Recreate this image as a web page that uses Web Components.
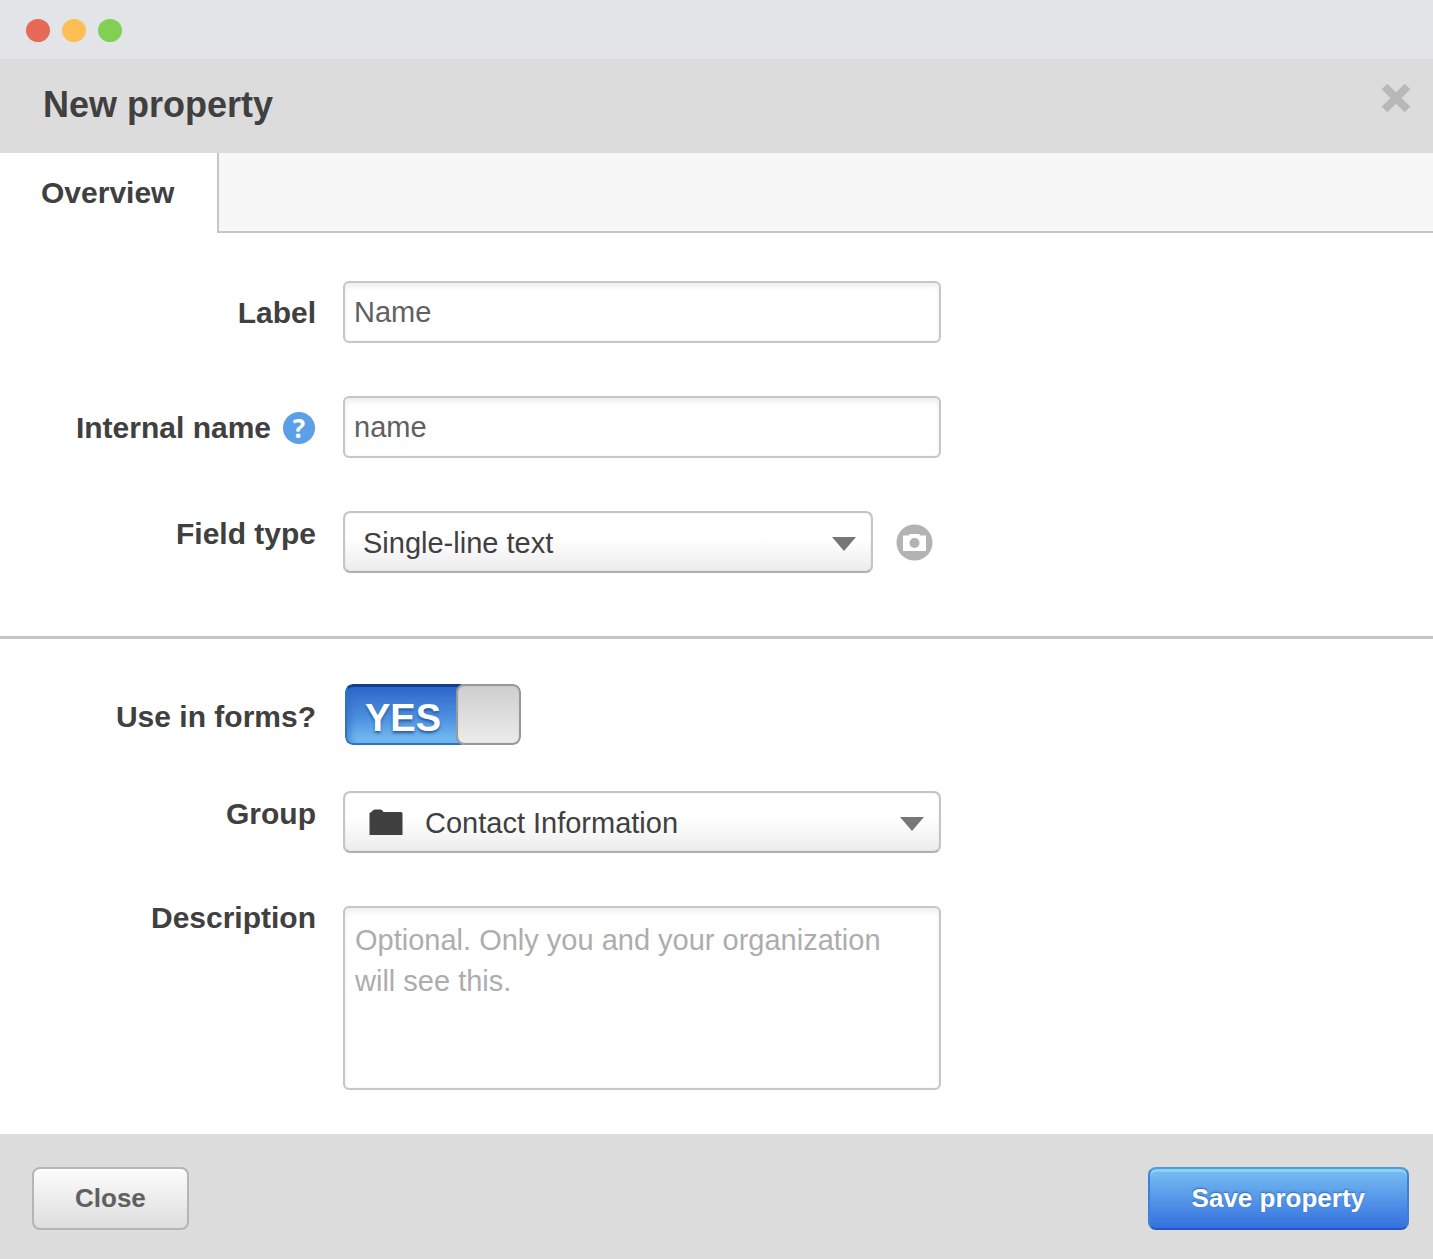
<!DOCTYPE html>
<html lang="en">
<head>
<meta charset="utf-8">
<meta name="viewport" content="width=device-width, initial-scale=1">
<title>New property</title>
<style>
  body { margin: 0; background: #fff; color: #404040; font-family: "Liberation Sans", Arial, sans-serif; }
</style>
</head>
<body>
<property-dialog></property-dialog>

<script>
const define = (name, html) => {
  const template = document.createElement('template');
  template.innerHTML = html;
  customElements.define(name, class extends HTMLElement {
    constructor() {
      super();
      this.attachShadow({ mode: 'open' }).append(template.content.cloneNode(true));
    }
  });
};

define('window-bar', `
<style>
  :host { display: flex; align-items: center; gap: 12px; box-sizing: border-box; height: 59px; padding: 1px 26px 0; background: #e2e4e8; }
  i { width: 24px; height: 23px; border-radius: 50%; background: #e66a57; }
  i:nth-of-type(2) { background: #fcbe55; }
  i:nth-of-type(3) { background: #80d153; }
</style>
<i></i><i></i><i></i>`);

define('dialog-header', `
<style>
  :host { display: flex; justify-content: space-between; align-items: flex-start; height: 94px; padding: 0 22px 0 43px; background: #dcdcdc; }
  h1 { margin: 0; font-size: 36px; line-height: 92px; font-weight: bold; }
  button { display: flex; margin: 24px 0 0; padding: 0; border: 0; background: none; cursor: pointer; }
</style>
<h1><slot></slot></h1>
<button type="button" aria-label="Close dialog">
  <svg width="30" height="30" viewBox="0 0 30 30" fill="none" stroke="#b8b8b8" stroke-width="8"><path d="M3.500 3.500 26.500 26.500M26.500 3.500 3.500 26.500"/></svg>
</button>`);

define('tab-strip', `
<style>
  :host { display: flex; height: 80px; }
  nav { display: flex; }
  a { box-sizing: border-box; padding: 0 43px 0 41px; border-right: 2px solid #c6c6c6; background: #fff; color: #404040; font-size: 30px; font-weight: bold; line-height: 80px; text-decoration: none; }
  .rest { flex: 1; border-bottom: 2px solid #c6c6c6; background: #f7f7f7; }
</style>
<nav><a href="#overview" aria-current="page"><slot></slot></a></nav>
<div class="rest"></div>`);

define('form-section', `
<style>
  :host { display: flex; flex-direction: column; gap: 53px; padding: 48px 24px 63px 0; }
  :host([divided]) { border-top: 3px solid #c6c6c6; padding: 45px 24px 44px 0; }
</style>
<slot></slot>`);

define('form-row', `
<style>
  :host { display: grid; grid-template-columns: minmax(200px, 316px) minmax(0, 598px); column-gap: 27px; --label-height: 64px; margin-bottom: -2px; }
  :host([kind="select"]) { --label-height: 46px; margin-bottom: 0; }
  :host([kind="area"]) { --label-height: 24px; margin-bottom: 0; }
  :host([kind="switch"]) { --label-height: 66px; margin-bottom: -12px; }
  .label { display: flex; align-items: center; justify-content: flex-end; gap: 12px; height: var(--label-height); font-size: 30px; font-weight: bold; white-space: nowrap; }
  .control { display: flex; align-items: flex-start; gap: 23px; }
</style>
<div class="label"><slot name="label"></slot></div>
<div class="control"><slot></slot></div>`);

define('help-tip', `
<style>
  :host { display: flex; margin-right: 1px; }
  button { width: 32px; height: 32px; padding: 0; border: 0; border-radius: 50%; background: #5a9fe8; color: #fff; font: bold 26px/32px "Open Sans", sans-serif; cursor: pointer; }
</style>
<button type="button">?</button>`);

define('camera-button', `
<style>
  :host { display: flex; align-items: center; height: 62px; margin-right: 8px; }
  button { display: flex; padding: 0; border: 0; background: none; cursor: pointer; }
</style>
<button type="button" aria-label="Show example">
  <svg width="37" height="37" viewBox="0 0 37 37">
    <circle cx="18.500" cy="18.500" r="18" fill="#b3b3b3"/>
    <path d="M7 11.500h5.500l1.500-1.500h9l1.500 1.500H30V27H7z" fill="#fff"/>
    <circle cx="18.500" cy="19" r="5" fill="#b3b3b3"/>
  </svg>
</button>`);

define('text-field', `
<style>
  :host { display: block; flex: 1; min-width: 0; }
  ::slotted(*) { display: block; box-sizing: border-box; width: 100%; margin: 0; border: 2px solid #c6c6c6; border-radius: 6px; background: #fff; color: #606060; font: 29px/41px "Liberation Sans", Arial, sans-serif; box-shadow: inset 0 4px 5px #f0f0f0, inset 0 0 1px #c6c6c6; }
  ::slotted(input) { height: 62px; padding: 1px 9px 0; }
  ::slotted(textarea) { height: 184px; padding: 12px 20px 12px 10px; resize: none; }
  ::slotted(textarea)::placeholder { color: #adadad; opacity: 1; }
</style>
<slot></slot>`);

define('select-field', `
<style>
  :host { display: grid; flex: 1; min-width: 0; align-items: center; }
  ::slotted(*), svg { grid-area: 1 / 1; }
  ::slotted(select) { box-sizing: border-box; width: 100%; height: 62px; margin: 0; padding: 1px 50px 0 18px; appearance: none; border: 2px solid #c4c4c4; border-bottom-color: #b0b0b0; border-radius: 7px; background: linear-gradient(#fff 45%, #ececec); box-shadow: inset 0 0 1px #b8b8b8; color: #404040; font: 29px "Liberation Sans", Arial, sans-serif; }
  :host([icon]) ::slotted(select) { padding-left: 80px; }
  svg { justify-self: end; margin: 4px 17px 0 0; pointer-events: none; z-index: 1; }
  ::slotted(folder-icon) { justify-self: start; margin-left: 26px; pointer-events: none; }
</style>
<slot></slot>
<svg width="24" height="14" viewBox="0 0 24 14"><path d="M0 0h24L12 14z" fill="#777"/></svg>`);

define('folder-icon', `
<style>:host { display: flex; z-index: 1; }</style>
<svg width="34" height="27" viewBox="0 0 34 27"><path d="M.500 26V4.500Q.500 3 2.500 3Q3.500 .500 6 .500h5.500Q13.500 .500 14.500 3H32q1.500 0 1.500 1.500V26z" fill="#404040"/></svg>`);

define('toggle-switch', `
<style>
  :host { position: relative; display: flex; box-sizing: border-box; width: 176px; height: 61px; margin-left: 2px; border-radius: 8px; overflow: hidden; }
  ::slotted(input) { position: absolute; inset: 0; width: 100%; height: 100%; margin: 0; opacity: 0; cursor: pointer; }
  .on { box-sizing: border-box; flex: 1; margin-right: -6px; padding: 4px 0 0 18px; border: 2px solid #3273bd; border-right: 0; border-top: 3px solid #123f8d; border-radius: 8px 0 0 8px; background: linear-gradient(#2f68cc, #4d90df 55%, #78c0f2); box-shadow: inset 4px 2px 6px #2d66bd80; color: #fff; font-size: 38px; font-weight: bold; line-height: 55px; text-shadow: 0 2px 3px #24589c; }
  .knob { box-sizing: border-box; width: 65px; border: 2px solid #999; border-radius: 8px; background: linear-gradient(#cecece, #ececec); box-shadow: inset 0 0 1px #999; }
</style>
<span class="on" aria-hidden="true">YES</span><span class="knob"></span><slot></slot>`);

define('push-button', `
<style>
  :host { display: block; }
  button { box-sizing: border-box; height: 63px; padding: 0 41px; border: 2px solid #b5b5b5; border-radius: 8px; background: linear-gradient(#fbfbfb, #dedede); box-shadow: inset 0 2px #fff; color: #606060; font: bold 26px "Liberation Sans", Arial, sans-serif; cursor: pointer; }
  :host([primary]) button { padding: 0 42px; border-color: #529ada #3f7edb #2559bf; background: linear-gradient(#78bff2, #3470df); box-shadow: inset 0 3px #8bd0f5; color: #fff; text-shadow: 0 -1px 2px #2e65b5; }
</style>
<button type="button"><slot></slot></button>`);

define('dialog-footer', `
<style>
  :host { display: flex; justify-content: space-between; align-items: center; box-sizing: border-box; height: 125px; padding: 4px 24px 0 32px; background: #dcdcdc; }
</style>
<slot></slot>`);

define('property-dialog', `
<style>
  :host { display: flex; flex-direction: column; min-height: 100vh; }
  main { flex: 1; }
</style>
<window-bar></window-bar>
<dialog-header>New property</dialog-header>
<tab-strip>Overview</tab-strip>
<main id="overview">
  <form-section>
    <form-row>
      <label slot="label" for="label">Label</label>
      <text-field><input type="text" id="label" value="Name"></text-field>
    </form-row>
    <form-row>
      <label slot="label" for="internal">Internal name</label>
      <help-tip slot="label"></help-tip>
      <text-field><input type="text" id="internal" value="name"></text-field>
    </form-row>
    <form-row kind="select">
      <label slot="label" for="type">Field type</label>
      <select-field><select id="type"><option>Single-line text</option></select></select-field>
      <camera-button></camera-button>
    </form-row>
  </form-section>
  <form-section divided>
    <form-row kind="switch">
      <label slot="label" for="forms">Use in forms?</label>
      <toggle-switch><input type="checkbox" role="switch" id="forms" checked></toggle-switch>
    </form-row>
    <form-row kind="select">
      <label slot="label" for="group">Group</label>
      <select-field icon><select id="group"><option>Contact Information</option></select><folder-icon></folder-icon></select-field>
    </form-row>
    <form-row kind="area">
      <label slot="label" for="description">Description</label>
      <text-field><textarea id="description" placeholder="Optional. Only you and your organization will see this."></textarea></text-field>
    </form-row>
  </form-section>
</main>
<dialog-footer>
  <push-button>Close</push-button>
  <push-button primary>Save property</push-button>
</dialog-footer>`);
</script>
</body>
</html>
